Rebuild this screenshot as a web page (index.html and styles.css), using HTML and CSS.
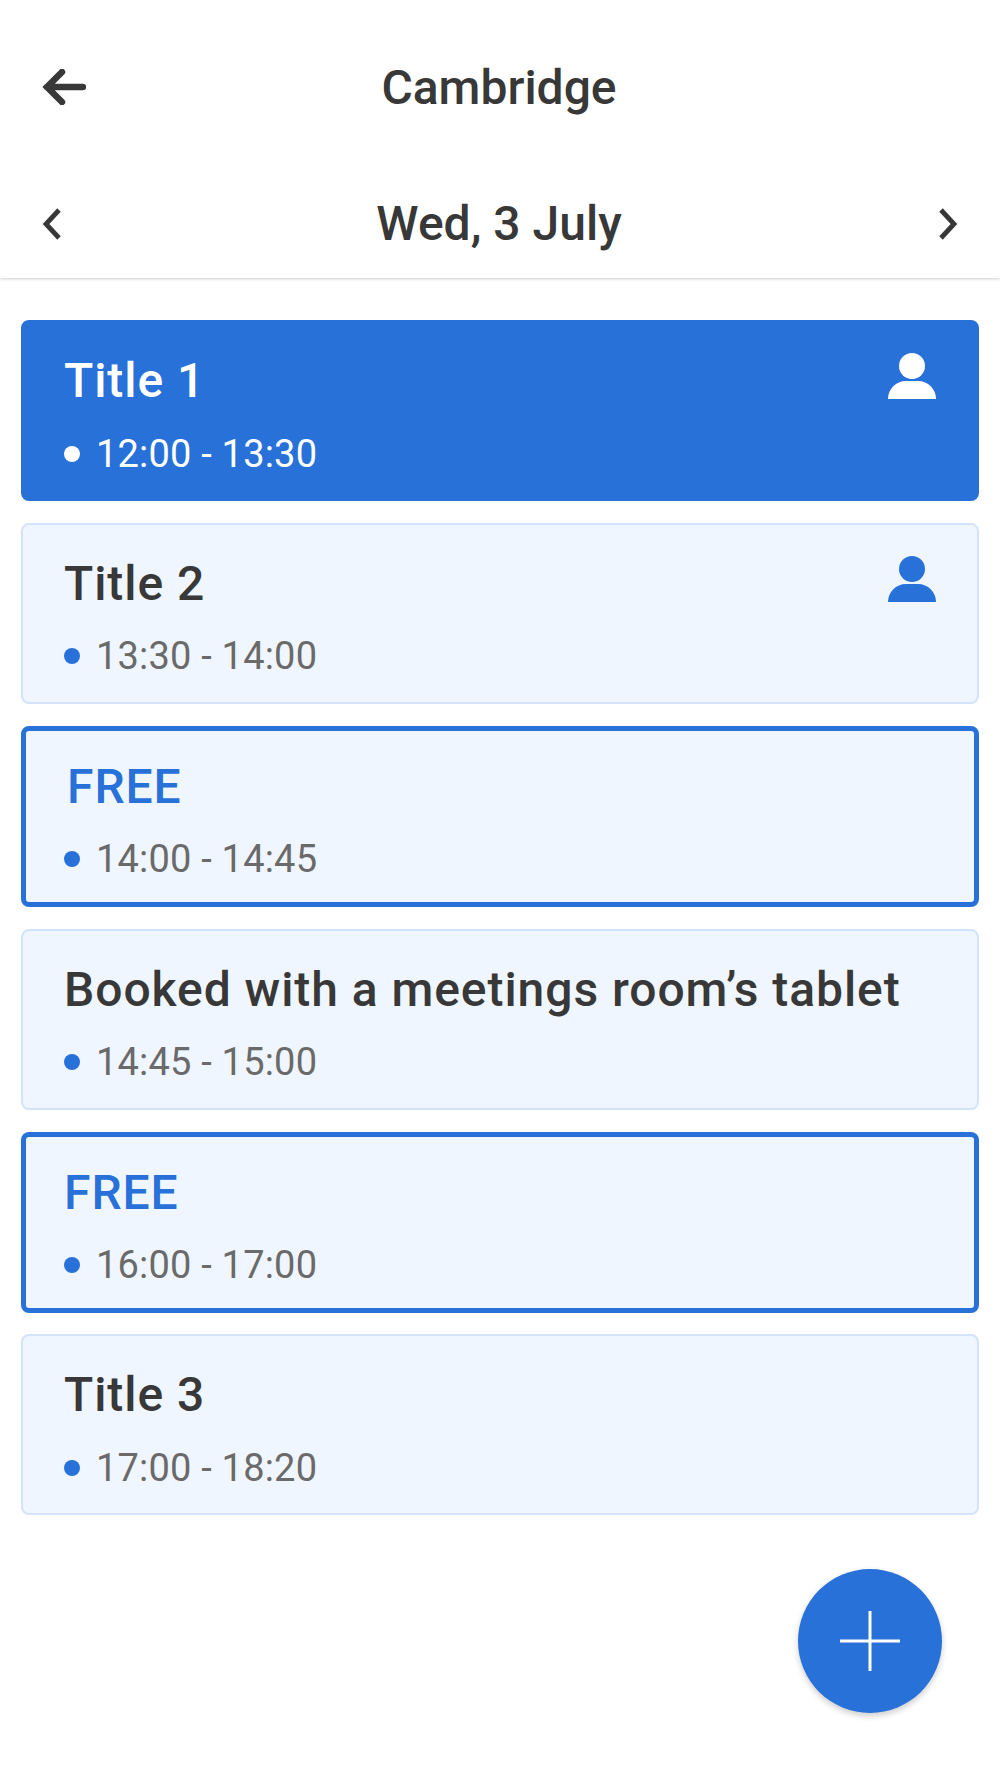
FILE: index.html
```html
<!DOCTYPE html>
<html lang="en">
<head>
    <meta charset="UTF-8">
    <meta name="viewport" content="width=device-width, initial-scale=1.0">
    <title>Cambridge</title>
    <link rel="stylesheet" href="styles.css">
</head>
<body>
    <header class="top-bar">
        <div class="title-row">
            <svg class="back-icon" viewBox="0 0 44 36" width="44" height="36">
                <path d="M20 3 L5 18 L20 33 M5 18 H41" fill="none" stroke="#383838" stroke-width="6.5" stroke-linecap="round" stroke-linejoin="miter"/>
            </svg>
            <h1>Cambridge</h1>
        </div>
        <div class="date-row">
            <svg class="chevron" viewBox="0 0 20 32" width="20" height="32">
                <path d="M17 2 L4 16 L17 30" fill="none" stroke="#383838" stroke-width="4.8"/>
            </svg>
            <h2>Wed, 3 July</h2>
            <svg class="chevron" viewBox="0 0 20 32" width="20" height="32">
                <path d="M3 2 L16 16 L3 30" fill="none" stroke="#383838" stroke-width="4.8"/>
            </svg>
        </div>
    </header>

    <main class="slots">
        <div class="slot slot-active">
            <div class="slot-title">Title 1</div>
            <div class="slot-time"><span class="dot"></span>12:00 - 13:30</div>
            <svg class="person" viewBox="0 0 48 46" width="48" height="46">
                <circle cx="24" cy="13" r="13"/>
                <path d="M0 46 C0 36 8 28 18 28 H30 C40 28 48 36 48 46 Z"/>
            </svg>
        </div>
        <div class="slot">
            <div class="slot-title">Title 2</div>
            <div class="slot-time"><span class="dot"></span>13:30 - 14:00</div>
            <svg class="person" viewBox="0 0 48 46" width="48" height="46">
                <circle cx="24" cy="13" r="13"/>
                <path d="M0 46 C0 36 8 28 18 28 H30 C40 28 48 36 48 46 Z"/>
            </svg>
        </div>
        <div class="slot slot-free">
            <div class="slot-title free-shifted">FREE</div>
            <div class="slot-time"><span class="dot"></span>14:00 - 14:45</div>
        </div>
        <div class="slot">
            <div class="slot-title">Booked with a meetings room’s tablet</div>
            <div class="slot-time"><span class="dot"></span>14:45 - 15:00</div>
        </div>
        <div class="slot slot-free">
            <div class="slot-title">FREE</div>
            <div class="slot-time"><span class="dot"></span>16:00 - 17:00</div>
        </div>
        <div class="slot">
            <div class="slot-title">Title 3</div>
            <div class="slot-time"><span class="dot"></span>17:00 - 18:20</div>
        </div>
    </main>

    <button class="add-button" type="button" aria-label="Add">
        <svg viewBox="0 0 60 60" width="60" height="60">
            <path d="M30 0 V60 M0 30 H60" fill="none" stroke="#fff" stroke-width="3"/>
        </svg>
    </button>
</body>
</html>
```

FILE: styles.css
```css
* {
    margin: 0;
    padding: 0;
    box-sizing: border-box;
}

body {
    font-family: Roboto, sans-serif;
    background-color: #fff;
    color: #383838;
    width: 1000px;
    height: 1778px;
    position: relative;
    overflow: hidden;
}

.top-bar {
    height: 278px;
    box-shadow: 0 1px 3px rgba(0, 0, 0, 0.2);
}

.title-row {
    height: 174px;
    padding-right: 2px;
    position: relative;
    display: flex;
    justify-content: center;
    align-items: center;
}

.back-icon {
    position: absolute;
    left: 42px;
    top: 69px;
}

h1 {
    font-size: 48px;
    font-weight: 500;
}

.date-row {
    height: 104px;
    padding: 0 42px 4px;
    display: flex;
    justify-content: space-between;
    align-items: center;
}

h2 {
    margin: 0 2px 2px 0;
    font-size: 48px;
    font-weight: 500;
}

.slots {
    padding: 42px 21px 0;
    display: flex;
    flex-direction: column;
    gap: 21.9px;
}

.slot {
    height: 181px;
    position: relative;
    padding: 31px 41px 0;
    background-color: #f0f6ff;
    border: 2px solid #d3e3fa;
    border-radius: 8px;
}

.slot-title {
    font-size: 48px;
    font-weight: 500;
    line-height: 56px;
    letter-spacing: 0.94px;
}

.slot-time {
    margin-top: 21.5px;
    font-size: 38px;
    line-height: 46px;
    letter-spacing: 0.2px;
    color: #6a6a6a;
    display: flex;
    align-items: center;
}

.dot {
    width: 16px;
    height: 16px;
    margin-right: 16px;
    border-radius: 50%;
    background-color: #2871d9;
}

.person {
    position: absolute;
    top: 31px;
    right: 41px;
    fill: #2871d9;
}

.slot-active {
    background-color: #2871d9;
    border-color: #2871d9;
    color: #fff;
}

.slot-active .slot-time {
    color: #fff;
}

.slot-active .dot {
    background-color: #fff;
}

.slot-active .person {
    fill: #fff;
}

.slot-free {
    border: 5px solid #2871d9;
    padding: 28px 38px 0;
}

.slot-free .slot-title {
    color: #2871d9;
}

.free-shifted {
    margin-left: 3px;
}

.add-button {
    position: absolute;
    left: 798px;
    top: 1569px;
    width: 144px;
    height: 144px;
    border: none;
    border-radius: 50%;
    background-color: #2871d9;
    box-shadow: 0 3px 6px rgba(0, 0, 0, 0.2);
    display: flex;
    justify-content: center;
    align-items: center;
}
```
